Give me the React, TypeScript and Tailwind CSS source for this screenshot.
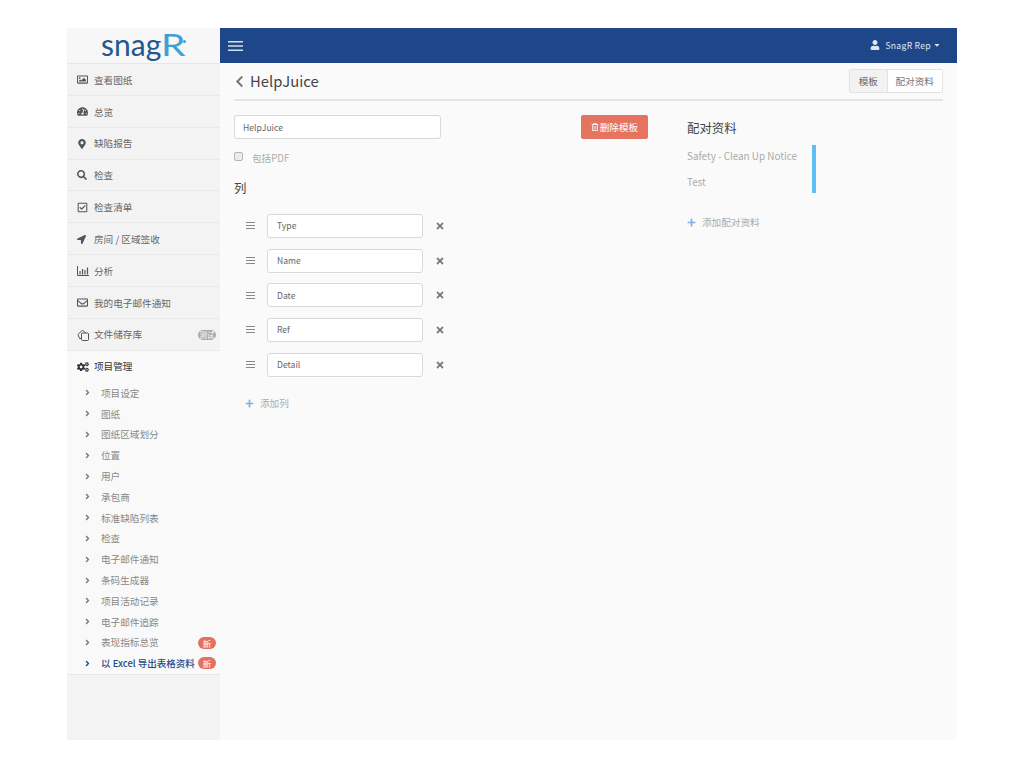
import { ReactNode } from "react";
import {
  FaAngleRight,
  FaCaretDown,
  FaChevronLeft,
  FaCogs,
  FaLocationArrow,
  FaMapMarkerAlt,
  FaPlus,
  FaRegCheckSquare,
  FaRegEnvelope,
  FaRegImage,
  FaRegTrashAlt,
  FaSearch,
  FaTachometerAlt,
  FaTimes,
  FaUser,
} from "react-icons/fa";

const font = "font-['Noto_Sans_CJK_SC','Noto_Sans',sans-serif]";

function BarsIcon() {
  return (
    <svg width="12" height="10" viewBox="0 0 12 10" fill="none">
      <path d="M0.5 0v9.5H12" stroke="currentColor" />
      <path d="M3 5v3.5M5.5 3v5.5M8 4v4.5M10.5 1.5v7" stroke="currentColor" strokeWidth="1.2" />
    </svg>
  );
}

function FilesIcon() {
  return (
    <svg width="12" height="12" viewBox="0 0 12 12" fill="none" stroke="currentColor">
      <rect x="4.5" y="4" width="7" height="7.5" rx="1" />
      <path d="M4.5 9.5H2.5L1 5.5 5.5 1l3 3" />
    </svg>
  );
}

function Burger({ w, h, weight, className }: { w: number; h: number; weight: number; className: string }) {
  return (
    <svg width={w} height={h} viewBox={`0 0 ${w} ${h}`} className={className}>
      <rect width={w} height={weight} fill="currentColor" />
      <rect y={(h - weight) / 2} width={w} height={weight} fill="currentColor" />
      <rect y={h - weight} width={w} height={weight} fill="currentColor" />
    </svg>
  );
}

const menu: { icon: ReactNode; label: string; badge?: string }[] = [
  { icon: <FaRegImage size={11} />, label: "查看图纸" },
  { icon: <FaTachometerAlt size={11} />, label: "总览" },
  { icon: <FaMapMarkerAlt size={10} />, label: "缺陷报告" },
  { icon: <FaSearch size={10} />, label: "检查" },
  { icon: <FaRegCheckSquare size={11} />, label: "检查清单" },
  { icon: <FaLocationArrow size={9} />, label: "房间 / 区域签收" },
  { icon: <BarsIcon />, label: "分析" },
  { icon: <FaRegEnvelope size={11} />, label: "我的电子邮件通知" },
  { icon: <FilesIcon />, label: "文件储存库", badge: "测试" },
];

const subMenu: { label: string; badge?: boolean; active?: boolean }[] = [
  { label: "项目设定" },
  { label: "图纸" },
  { label: "图纸区域划分" },
  { label: "位置" },
  { label: "用户" },
  { label: "承包商" },
  { label: "标准缺陷列表" },
  { label: "检查" },
  { label: "电子邮件通知" },
  { label: "条码生成器" },
  { label: "项目活动记录" },
  { label: "电子邮件追踪" },
  { label: "表现指标总览", badge: true },
  { label: "以 Excel 导出表格资料", badge: true, active: true },
];

const columns = ["Type", "Name", "Date", "Ref", "Detail"];

function Sidebar() {
  return (
    <aside className="w-[153px] shrink-0 bg-[#f3f3f3] flex flex-col">
      <div className="h-[36px] shrink-0 bg-[#f7f7f7] border-b border-[#e6e6e6] flex items-center pl-[34px]">
        <span className="relative font-['Lato',sans-serif] text-[30px] leading-none text-[#23578f] -mt-[4px]">
          snag
          <span className="inline-block origin-left scale-x-[1.3] text-[#3f9fd6]">R</span>
          <span className="absolute left-[82px] top-[11px] w-[3px] h-[3px] rounded-full bg-[#3f9fd6]" />
        </span>
      </div>
      {menu.map((item) => (
        <div
          key={item.label}
          className="h-[31.85px] shrink-0 border-b-[1.5px] border-[#e9e9e9] flex items-center pl-[10px] pt-[1px] text-[9.65px] text-[#666]"
        >
          <span className="w-[17px] flex justify-start text-[#555]">{item.icon}</span>
          <span className="flex-1">{item.label}</span>
          {item.badge && (
            <span className="mr-[4px] w-[18px] text-center rounded-full bg-[#a9a9a9] text-white text-[7.5px] leading-[10px]">
              {item.badge}
            </span>
          )}
        </div>
      ))}
      <div className="bg-[#f9f9f9] border-b border-[#e6e6e6]">
        <div className="h-[32px] flex items-center pl-[10px] text-[9.65px] text-[#333]">
          <span className="w-[17px] text-[#333]">
            <FaCogs size={12} />
          </span>
          项目管理
        </div>
        <div className="flex flex-col">
          {subMenu.map((s) => (
            <div
              key={s.label}
              className={`h-[20.8px] flex items-center pl-[16px] text-[9.65px] ${
                s.active ? "text-[#1f4a8a] font-medium" : "text-[#888]"
              }`}
            >
              <span className={`w-[18px] ${s.active ? "text-[#1f4a8a]" : "text-[#777]"}`}>
                <FaAngleRight size={9} />
              </span>
              <span className={`flex-1 whitespace-nowrap ${s.active ? "text-[9.5px]" : ""}`}>{s.label}</span>
              {s.badge && (
                <span className="mr-[4px] w-[18px] text-center rounded-full bg-[#e2725f] text-white text-[8.5px] font-normal leading-[12px]">
                  新
                </span>
              )}
            </div>
          ))}
        </div>
      </div>
    </aside>
  );
}

function Header() {
  return (
    <header className="h-[35px] shrink-0 bg-[#1d4788] flex items-center justify-between pl-[8px] pr-[16px] text-white">
      <Burger w={15} h={10} weight={1.5} className="text-[#d5e0ee]" />
      <div className="flex items-center gap-[4px] text-[8.7px] tracking-[0.25px] text-[#dde6f2]">
        <FaUser size={10} className="mr-[1px]" />
        <span className="mr-[-2px]">SnagR Rep</span>
        <FaCaretDown size={8} />
      </div>
    </header>
  );
}

function ColumnRow({ name }: { name: string }) {
  return (
    <div className="h-[34.7px] flex items-center">
      <Burger w={9} h={7} weight={1} className="ml-[12px] text-[#888]" />
      <div className="ml-[12px] w-[156px] h-[24px] bg-white border border-[#d9d9d9] rounded-[3px] flex items-center pl-[9px] text-[8.6px] text-[#666]">
        {name}
      </div>
      <FaTimes size={10} className="ml-[12px] text-[#777]" />
    </div>
  );
}

function Main() {
  return (
    <main className="flex-1 bg-[#fafafa] px-[14px]">
      <div className="h-[38px] border-b-2 border-[#e4e4e4] flex items-center justify-between">
        <div className="flex items-center gap-[4px]">
          <FaChevronLeft size={13} className="-ml-[1px] text-[#777]" />
          <h1 className="text-[14.8px] text-[#444] font-normal">HelpJuice</h1>
        </div>
        <div className="flex text-[9.65px] text-[#777] border border-[#e2e2e2] rounded-[2px] h-[24px]">
          <div className="px-[8.5px] bg-[#f2f2f2] border-r border-[#e2e2e2] flex items-center text-[#666]">模板</div>
          <div className="px-[8px] bg-white flex items-center">配对资料</div>
        </div>
      </div>
      <div className="flex pt-[14px]">
        <div className="w-[453px] flex flex-col">
          <div className="flex items-start justify-between pr-[39px]">
            <div className="w-[207px] h-[24px] bg-white border border-[#d9d9d9] rounded-[3px] flex items-center pl-[8px] text-[8.6px] text-[#666]">
              HelpJuice
            </div>
            <button className="w-[67px] h-[24px] bg-[#e5735f] rounded-[2px] text-white text-[9.65px] flex items-center justify-center gap-[1px]">
              <FaRegTrashAlt size={8} />
              删除模板
            </button>
          </div>
          <div className="flex items-center mt-[11px] text-[9.65px] text-[#aaa] h-[16px]">
            <span className="w-[9px] h-[9px] bg-[#ececec] border border-[#b5b5b5] rounded-[2px] -mt-[3px]" />
            <span className="ml-[9px]">包括PDF</span>
          </div>
          <div className="mt-[13px] text-[12.4px] text-[#444] leading-[18px]">列</div>
          <div className="mt-[11.5px] flex flex-col">
            {columns.map((c) => (
              <ColumnRow key={c} name={c} />
            ))}
          </div>
          <div className="mt-[14px] ml-[11px] flex items-center gap-[6px] text-[9.65px] text-[#aaa]">
            <FaPlus size={9} className="text-[#7fb2e0]" />
            添加列
          </div>
        </div>
        <div className="flex flex-col">
          <div className="text-[12.4px] text-[#444] leading-[18px] mt-[4px]">配对资料</div>
          <div className="mt-[8px] w-[129px] h-[48px] border-r-[4px] border-[#5bc0f5] text-[9.9px] text-[#aaa]">
            <div className="h-[23px] flex items-center">Safety - Clean Up Notice</div>
            <div className="h-[27px] pt-[1px] flex items-center">Test</div>
          </div>
          <div className="mt-[22px] flex items-center gap-[6px] text-[9.65px] text-[#aaa]">
            <FaPlus size={9} className="text-[#7fb2e0]" />
            添加配对资料
          </div>
        </div>
      </div>
    </main>
  );
}

export default function App() {
  return (
    <div className={`min-h-[768px] bg-white pt-[28px] pl-[67px] ${font}`}>
      <div className="w-[890px] h-[712px] flex">
        <Sidebar />
        <div className="flex-1 flex flex-col">
          <Header />
          <Main />
        </div>
      </div>
    </div>
  );
}
